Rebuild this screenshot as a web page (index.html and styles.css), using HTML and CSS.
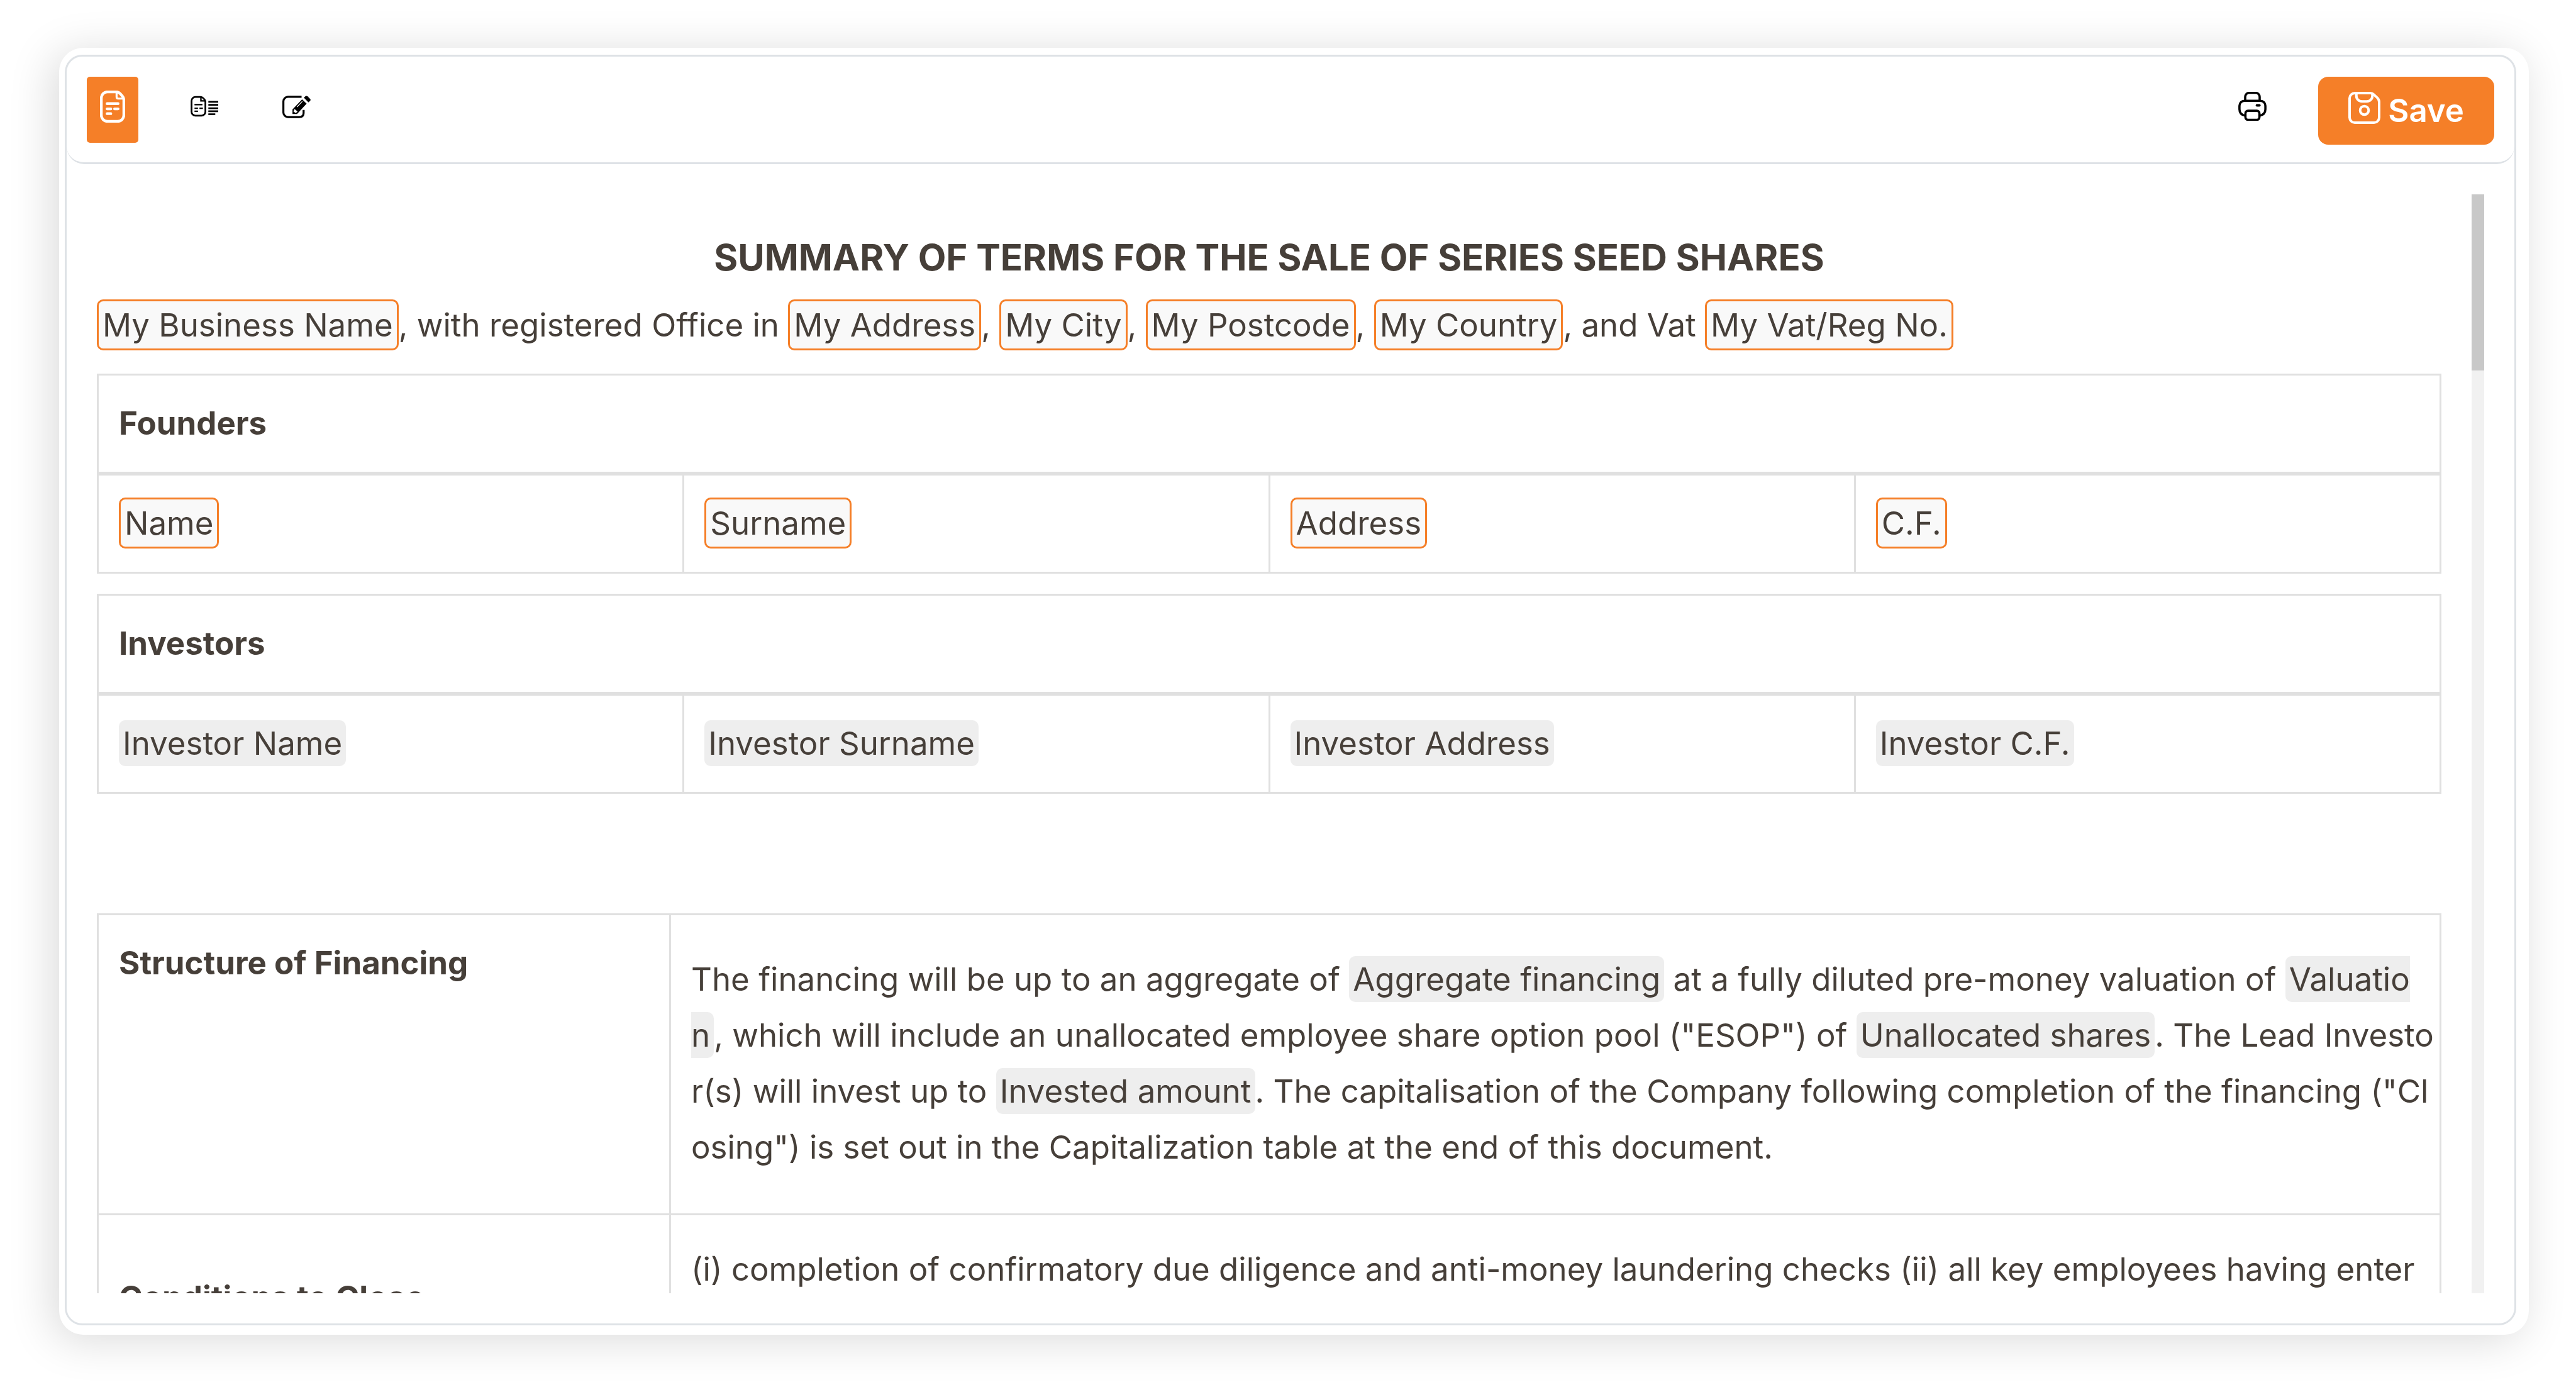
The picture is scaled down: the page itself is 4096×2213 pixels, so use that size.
FILE: index.html
```html
<!DOCTYPE html>
<html lang="en">
<head>
    <meta charset="UTF-8">
    <meta name="viewport" content="width=device-width, initial-scale=1.0">
    <title>Summary of Terms</title>
    <link rel="stylesheet" href="styles.css">
</head>
<body>
    <div class="card">
        <div class="editor">
            <div class="toolbar">
                <button type="button" class="tool active" aria-label="Document">
                    <svg class="icon-doc" viewBox="0 0 50 64" fill="none" stroke="currentColor" stroke-width="5.500" stroke-linecap="round" stroke-linejoin="round">
                        <path d="M15 2.5H32Q37 2.5 40 6L44.500 11Q47.500 14.500 47.500 19V49A12.500 12.500 0 0 1 35 61.500H15A12.500 12.500 0 0 1 2.500 49V15A12.500 12.500 0 0 1 15 2.500Z"/>
                        <path d="M33 4V13Q33 16 36 16H46" stroke-width="4"/>
                        <path d="M14 26H36M14 36.500H21.500M29 36.500H36M14 46H21.500"/>
                    </svg>
                </button>
                <button type="button" class="tool" aria-label="Document with text">
                    <svg class="icon-split" viewBox="0 0 56 42" fill="none" stroke="currentColor" stroke-width="3.500">
                        <path d="M10 2H20Q23 2 25 4L28 7Q30 9 30 12V32A8 8 0 0 1 22 40H10A8 8 0 0 1 2 32V10A8 8 0 0 1 10 2Z"/>
                        <path d="M21 3V10H29" stroke-width="3"/>
                        <path d="M8 17.500H24M8 25H15M18 25H25M8 31H15" stroke-width="3"/>
                        <path d="M36 12H56M36 18H56M36 25H56M36 31H56M36 37H50"/>
                    </svg>
                </button>
                <button type="button" class="tool" aria-label="Edit">
                    <svg class="icon-edit" viewBox="0 0 56 44" fill="none" stroke="currentColor" stroke-width="4">
                        <path d="M38 2H11A9 9 0 0 0 2 11V33A9 9 0 0 0 11 42H33Q42 42 42 34V28"/>
                        <path d="M20 36V27L39 7L48 15.500L29 36Z" fill="currentColor" stroke="none"/>
                        <path d="M42.500 3.500L46 0.500Q48 -0.500 50 1L55 6Q56.500 8 55 10L51.500 13Z" fill="currentColor" stroke="none"/>
                        <path d="M29 22L39.500 11" stroke="#fff" stroke-width="1.500"/>
                        <path d="M24 26L30 31L26.500 34L22 31Z" fill="#fff" stroke="none"/>
                    </svg>
                </button>
                <button type="button" class="tool print" aria-label="Print">
                    <svg class="icon-print" viewBox="0 0 56 58" fill="none" stroke="currentColor" stroke-width="4.500">
                        <path d="M13.500 17V10A8 8 0 0 1 21.500 2H34.500A8 8 0 0 1 42.500 10V17"/>
                        <path d="M14 48Q2 46 2 35V28A10 10 0 0 1 12 18H44A10 10 0 0 1 54 28V35Q54 46 42 48"/>
                        <rect x="14" y="38" width="28" height="18" rx="5"/>
                        <path d="M37 27H42" stroke-width="5" stroke-linecap="round"/>
                    </svg>
                </button>
                <button type="button" class="save">
                    <svg class="icon-save" viewBox="0 0 64 64" fill="none" stroke="currentColor" stroke-width="5">
                        <path d="M13 2.500H44Q48 2.500 51 5.500L58 12Q61.500 15.500 61.500 20V51A10.500 10.500 0 0 1 51 61.500H13A10.500 10.500 0 0 1 2.500 51V13A10.500 10.500 0 0 1 13 2.500Z"/>
                        <path d="M16 3V8A11 11 0 0 0 27 19H37A11 11 0 0 0 48 8V4"/>
                        <circle cx="32" cy="37" r="8.500"/>
                    </svg>
                    Save
                </button>
            </div>

            <div class="viewer">
                <div class="document">
                    <h1>SUMMARY OF TERMS FOR THE SALE OF SERIES SEED SHARES</h1>
                    <p class="intro"><span class="field">My Business Name</span>, with registered Office in <span class="field">My Address</span>, <span class="field">My City</span>, <span class="field">My Postcode</span>, <span class="field">My Country</span>, and Vat <span class="field">My Vat/Reg No.</span></p>

                    <table class="people">
                        <thead>
                            <tr><th colspan="4">Founders</th></tr>
                        </thead>
                        <tbody>
                            <tr>
                                <td><span class="field">Name</span></td>
                                <td><span class="field">Surname</span></td>
                                <td><span class="field">Address</span></td>
                                <td><span class="field">C.F.</span></td>
                            </tr>
                        </tbody>
                    </table>

                    <table class="people">
                        <thead>
                            <tr><th colspan="4">Investors</th></tr>
                        </thead>
                        <tbody>
                            <tr>
                                <td><span class="blank">Investor Name</span></td>
                                <td><span class="blank">Investor Surname</span></td>
                                <td><span class="blank">Investor Address</span></td>
                                <td><span class="blank">Investor C.F.</span></td>
                            </tr>
                        </tbody>
                    </table>

                    <table class="terms">
                        <tbody>
                            <tr>
                                <th scope="row">Structure of Financing</th>
                                <td><p>The financing will be up to an aggregate of <span class="blank">Aggregate financing</span> at a fully diluted pre-money valuation of <span class="blank">Valuatio<br>n</span>, which will include an unallocated employee share option pool ("ESOP") of <span class="blank">Unallocated shares</span>. The Lead Investo<br>r(s) will invest up to <span class="blank">Invested amount</span>. The capitalisation of the Company following completion of the financing ("Cl<br>osing") is set out in the Capitalization table at the end of this document.</p></td>
                            </tr>
                            <tr class="conditions">
                                <th scope="row">Conditions to Close</th>
                                <td>(i) completion of confirmatory due diligence and anti-money laundering checks (ii) all key employees having enter</td>
                            </tr>
                        </tbody>
                    </table>
                </div>
                <div class="scrollbar"><div class="thumb"></div></div>
            </div>
        </div>
    </div>
</body>
</html>
```
FILE: styles.css
```css
* {
    box-sizing: border-box;
}

body {
    font-family: 'Inter', sans-serif;
    font-size: 51px;
    line-height: 89px;
    color: #463f39;
    background: #fff;
    margin: 0;
    height: 100vh;
    padding: 76px 75px 91px 94px;
    overflow: hidden;
}

.card {
    height: 100%;
    padding: 11px 20px 15px 9px;
    background: #fff;
    border-radius: 38px;
    box-shadow: -10px 8px 70px rgba(0, 0, 0, 0.15);
}

.editor {
    display: flex;
    flex-direction: column;
    height: 100%;
    border: 3px solid #dee2e6;
    border-radius: 28px;
}

/* toolbar */
.toolbar {
    display: flex;
    align-items: flex-start;
    padding: 32px 32px 28px;
    border-bottom: 3px solid #dee2e6;
    border-radius: 0 0 28px 28px;
}

button {
    font-family: inherit;
    border: none;
    cursor: pointer;
}

.tool {
    display: flex;
    justify-content: center;
    width: 82px;
    height: 105px;
    margin-right: 64px;
    padding: 22px 0 0;
    background: none;
    color: #000;
    border-radius: 5px;
}

.tool.active {
    background: #f57f28;
    color: #fff;
}

.tool:not(.active) {
    padding-top: 30px;
}

.tool.print {
    margin-left: auto;
    padding-top: 24px;
}

.icon-doc {
    width: 40px;
    height: 51px;
}

.icon-split {
    width: 44px;
    height: 34px;
}

.icon-edit {
    width: 45px;
    height: 36px;
}

.icon-print {
    width: 45px;
    height: 46px;
}

.icon-save {
    width: 51px;
    height: 51px;
}

.save {
    display: flex;
    gap: 12px;
    height: 108px;
    padding: 24px 48px;
    font-size: 51px;
    font-weight: 600;
    line-height: 60px;
    color: #fff;
    background: #f57f28;
    border-radius: 16px;
}

/* document */
.viewer {
    display: flex;
    flex: 1;
    min-height: 0;
    gap: 48px;
    margin: 48px;
}

.document {
    flex: 1;
    overflow: hidden;
}

.scrollbar {
    width: 20px;
    background: #f1f1f1;
}

.thumb {
    height: 16%;
    background: #c8c8c8;
}

h1 {
    margin: 56px 0 18px;
    font-size: 58px;
    font-weight: 700;
    line-height: 89px;
    text-align: center;
}

p {
    margin: 0;
}

.intro {
    margin-bottom: 33px;
}

.field,
.blank {
    border-radius: 10px;
}

.field {
    padding: 7px 6px;
    background: #f9f9f9;
    border: 3px solid #f57f28;
}

.blank {
    padding: 6px;
    background: #eee;
}

table {
    width: 100%;
    margin-bottom: 32px;
    border-collapse: collapse;
    table-layout: fixed;
}

th,
td {
    padding: 31px 32px 33px;
    border: 3px solid #e0e0e0;
    text-align: left;
    vertical-align: top;
}

th {
    font-weight: 700;
}

.people thead th {
    border-bottom-width: 6px;
}

.terms {
    margin-top: 190px;
}

.terms th {
    width: 910px;
}

.terms td {
    padding-right: 0;
    white-space: nowrap;
}

.terms p {
    margin: 26px 0 28px;
}

.terms .conditions th {
    padding-top: 86px;
}

.terms .conditions td {
    padding-top: 41px;
}
```
